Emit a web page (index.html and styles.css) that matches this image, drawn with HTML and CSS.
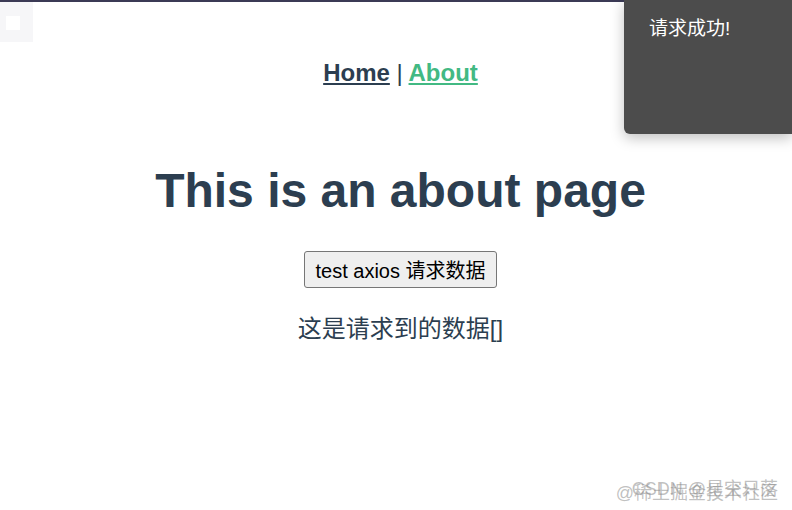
FILE: index.html
```html
<!DOCTYPE html>
<html lang="zh-CN">
<head>
    <meta charset="UTF-8">
    <meta name="viewport" content="width=device-width, initial-scale=1.0">
    <title>About</title>
    <link rel="stylesheet" href="styles.css">
</head>
<body>
    <div class="topbar"></div>
    <div class="corner-box"><span class="corner-dot"></span></div>
    <div id="app">
        <div id="nav">
            <a href="#/" class="nav-link">Home</a> <span class="sep">|</span> <a href="#/about" class="nav-link active">About</a>
        </div>
        <div class="about">
            <h1>This is an about page</h1>
            <button class="fetch-btn">test axios 请求数据</button>
            <p class="result">这是请求到的数据[]</p>
        </div>
    </div>
    <div class="toast">请求成功!</div>
    <div class="watermark">
        <span class="wm-back">@稀土掘金技术社区</span>
        <span class="wm-front">CSDN @星空只落</span>
    </div>
</body>
</html>
```

FILE: styles.css
```css
body {
    margin: 0;
    background-color: #fff;
    font-family: Arial, "Liberation Sans", "Noto Sans CJK SC", sans-serif;
}

.topbar {
    height: 2px;
    background-color: #3b3a55;
}

.corner-box {
    position: absolute;
    top: 2px;
    left: 0;
    width: 33px;
    height: 40px;
    background-color: #f6f6f8;
}

.corner-dot {
    position: absolute;
    top: 14px;
    left: 6px;
    width: 14px;
    height: 14px;
    background-color: #fff;
}

#app {
    padding-left: 9px;
    color: #2c3e50;
    text-align: center;
}

#nav {
    padding-top: 57px;
    font-size: 24px;
    font-weight: bold;
    color: #2c3e50;
}

.sep {
    font-weight: normal;
}

.nav-link {
    color: #2c3e50;
}

.nav-link.active {
    color: #42b983;
}

h1 {
    font-size: 48px;
    margin: 76px 0 33px;
}

.fetch-btn {
    font-family: Arial, "Liberation Sans", "Noto Sans CJK SC", sans-serif;
    font-size: 20px;
    padding: 3px 10px;
    color: #000;
    background-color: #efefef;
    border: 1px solid #767676;
    border-radius: 3px;
}

.result {
    font-size: 24px;
    margin: 21px 0 0;
}

.toast {
    position: absolute;
    top: 0;
    right: 0;
    width: 143px;
    height: 114px;
    padding: 13px 0 7px 25px;
    background-color: #4c4c4c;
    color: #fff;
    font-size: 19px;
    border-bottom-left-radius: 6px;
    box-shadow: 0 4px 14px rgba(0, 0, 0, 0.25);
}

.watermark {
    position: absolute;
    right: 14px;
    bottom: 10px;
    font-size: 18px;
    color: rgba(140, 140, 140, 0.55);
}

.wm-back {
    position: absolute;
    right: 0;
    top: 4px;
    white-space: nowrap;
}

.wm-front {
    position: relative;
    white-space: nowrap;
}
```
